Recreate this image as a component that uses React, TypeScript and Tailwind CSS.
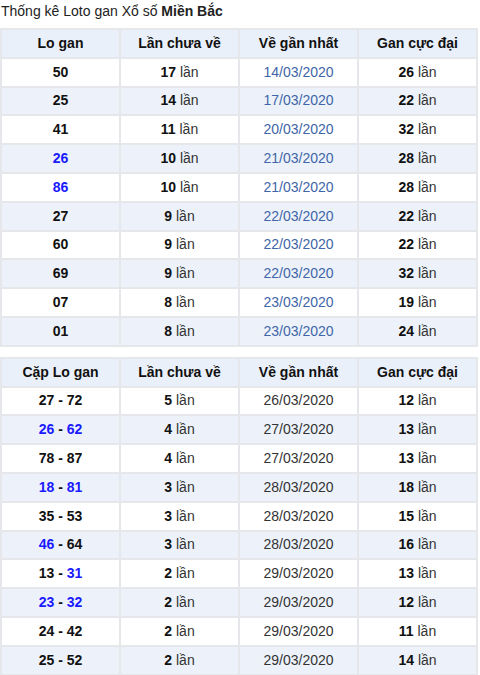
import React from "react";

type Part = { text: string; blue?: boolean };

interface GanRow {
  lo: Part[];
  times: string;
  date: string;
  max: string;
}

const table1: GanRow[] = [
  { lo: [{ text: "50" }], times: "17", date: "14/03/2020", max: "26" },
  { lo: [{ text: "25" }], times: "14", date: "17/03/2020", max: "22" },
  { lo: [{ text: "41" }], times: "11", date: "20/03/2020", max: "32" },
  { lo: [{ text: "26", blue: true }], times: "10", date: "21/03/2020", max: "28" },
  { lo: [{ text: "86", blue: true }], times: "10", date: "21/03/2020", max: "28" },
  { lo: [{ text: "27" }], times: "9", date: "22/03/2020", max: "22" },
  { lo: [{ text: "60" }], times: "9", date: "22/03/2020", max: "22" },
  { lo: [{ text: "69" }], times: "9", date: "22/03/2020", max: "32" },
  { lo: [{ text: "07" }], times: "8", date: "23/03/2020", max: "19" },
  { lo: [{ text: "01" }], times: "8", date: "23/03/2020", max: "24" },
];

const table2: GanRow[] = [
  { lo: [{ text: "27" }, { text: "72" }], times: "5", date: "26/03/2020", max: "12" },
  { lo: [{ text: "26", blue: true }, { text: "62", blue: true }], times: "4", date: "27/03/2020", max: "13" },
  { lo: [{ text: "78" }, { text: "87" }], times: "4", date: "27/03/2020", max: "13" },
  { lo: [{ text: "18", blue: true }, { text: "81", blue: true }], times: "3", date: "28/03/2020", max: "18" },
  { lo: [{ text: "35" }, { text: "53" }], times: "3", date: "28/03/2020", max: "15" },
  { lo: [{ text: "46", blue: true }, { text: "64" }], times: "3", date: "28/03/2020", max: "16" },
  { lo: [{ text: "13" }, { text: "31", blue: true }], times: "2", date: "29/03/2020", max: "13" },
  { lo: [{ text: "23", blue: true }, { text: "32", blue: true }], times: "2", date: "29/03/2020", max: "12" },
  { lo: [{ text: "24" }, { text: "42" }], times: "2", date: "29/03/2020", max: "11" },
  { lo: [{ text: "25" }, { text: "52" }], times: "2", date: "29/03/2020", max: "14" },
];

const LoCell = ({ parts }: { parts: Part[] }) => (
  <span className="font-bold">
    {parts.map((p, i) => (
      <React.Fragment key={i}>
        {i > 0 && <span className="text-[#111]"> - </span>}
        <span className={p.blue ? "text-[#1a1aff]" : "text-[#111]"}>{p.text}</span>
      </React.Fragment>
    ))}
  </span>
);

const GanTable = ({
  first,
  rows,
  dateBlue,
}: {
  first: string;
  rows: GanRow[];
  dateBlue: boolean;
}) => {
  const cell = "border-2 border-[#e6e7ea] text-center p-0 h-[28.8px]";
  return (
    <table className="w-[478px] border-collapse table-fixed text-[14px]">
      <thead>
        <tr className="bg-[#eaf0fa]">
          {[first, "Lần chưa về", "Về gần nhất", "Gan cực đại"].map((h) => (
            <th key={h} className={cell + " font-bold text-[#111]"}>
              {h}
            </th>
          ))}
        </tr>
      </thead>
      <tbody>
        {rows.map((r, i) => (
          <tr key={i} className={i % 2 === 1 ? "bg-[#edf2fa]" : "bg-white"}>
            <td className={cell}>
              <LoCell parts={r.lo} />
            </td>
            <td className={cell + " text-[#333]"}>
              <span className="font-bold text-[#111]">{r.times}</span> lần
            </td>
            <td className={cell + (dateBlue ? " text-[#4065a8]" : " text-[#333]")}>{r.date}</td>
            <td className={cell + " text-[#333]"}>
              <span className="font-bold text-[#111]">{r.max}</span> lần
            </td>
          </tr>
        ))}
      </tbody>
    </table>
  );
};

export default function App() {
  return (
    <div className="w-[480px] h-[675px] overflow-hidden bg-white font-['Liberation_Sans',Arial,sans-serif]">
      <div className="h-[28px] pl-[1px] pt-[1px] text-[14px] leading-[20px] text-[#222]">
        Thống kê Loto gan Xổ số <span className="font-bold">Miền Bắc</span>
      </div>
      <GanTable first="Lo gan" rows={table1} dateBlue />
      <div className="h-[10px]" />
      <GanTable first="Cặp Lo gan" rows={table2} dateBlue={false} />
    </div>
  );
}
